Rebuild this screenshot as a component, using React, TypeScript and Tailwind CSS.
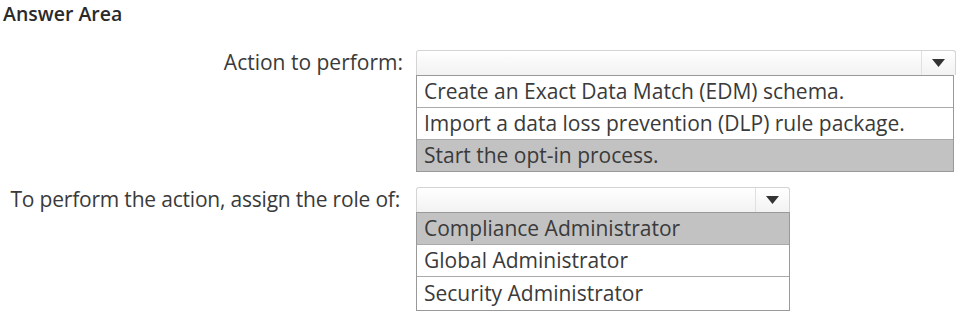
const Dropdown = ({ width, listWidth, options, selected, lastRow }: { width: string; listWidth: string; options: string[]; selected: number; lastRow: string }) => {
  return (
    <div className={`flex flex-col ${width}`}>
      {/* closed select */}
      <div className="h-[25px] flex border border-[#d4d4d4] border-b-0 rounded-t-[3px] bg-gradient-to-b from-white to-[#f2f2f2]">
        <div className="flex-1" />
        <div className="w-[34px] border-l border-[#e0e0e0] flex items-center justify-center">
          <svg width="13" height="8" viewBox="0 0 13 8">
            <path d="M0 0 L13 0 L6.5 8 Z" fill="#333" />
          </svg>
        </div>
      </div>
      {/* opened options */}
      <div className={`${listWidth} border border-[#999] bg-white`}>
        {options.map((opt, i) => (
          <div
            key={i}
            className={`flex items-center px-[7px] text-[21px] text-[#3a3a3a] ${i < options.length - 1 ? 'h-[32px] border-b border-[#aaa]' : lastRow} ${i === selected ? 'bg-[#c2c2c2]' : ''}`}
          >
            {opt}
          </div>
        ))}
      </div>
    </div>
  )
}

const App = () => {
  return (
    <div className="w-[957px] h-[311px] bg-white overflow-hidden text-[#3a3a3a]" style={{ fontFamily: '"Open Sans", "Noto Sans", sans-serif' }}>
      <div className="pl-[3px] h-[50px] text-[19.5px] font-semibold leading-[27px] text-[#2a2a2a]">Answer Area</div>

      {/* Action row */}
      <div className="flex gap-[13px]">
        <div className="w-[403px] h-[26px] flex items-center justify-end text-[21px]">Action to perform:</div>
        <Dropdown
          width="w-[540px]"
          listWidth="w-[538px]"
          selected={2}
          lastRow="h-[31px]"
          options={[
            'Create an Exact Data Match (EDM) schema.',
            'Import a data loss prevention (DLP) rule package.',
            'Start the opt-in process.',
          ]}
        />
      </div>

      {/* Role row */}
      <div className="flex gap-[16px] mt-[15px]">
        <div className="w-[400px] h-[26px] flex items-center justify-end text-[21px] tracking-[-0.2px]">To perform the action, assign the role of:</div>
        <Dropdown
          width="w-[374px]"
          listWidth="w-[374px]"
          selected={0}
          lastRow="h-[33px]"
          options={['Compliance Administrator', 'Global Administrator', 'Security Administrator']}
        />
      </div>
    </div>
  )
}

export default App
